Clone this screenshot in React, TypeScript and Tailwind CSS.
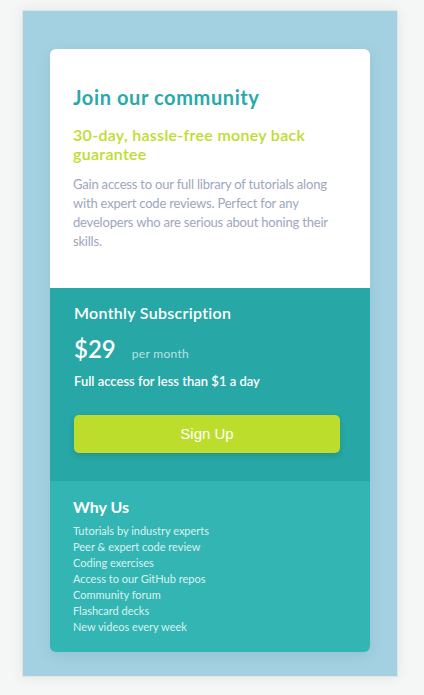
const perks = [
  'Tutorials by industry experts',
  'Peer & expert code review',
  'Coding exercises',
  'Access to our GitHub repos',
  'Community forum',
  'Flashcard decks',
  'New videos every week',
]

export default function App() {
  return (
    <div className="min-h-screen bg-[#f5f6f6] pl-[22px] pt-[10px] font-['Lato',sans-serif]">
      <div className="h-[667px] w-[376px] border border-[#dfe5e7] bg-[#a3d1e1] pl-[27px] pt-[38px] shadow-[0_0_12px_rgba(0,0,0,0.07)]">
        <div className="w-[320px] overflow-hidden rounded-md shadow-[0_4px_14px_rgba(40,90,110,0.12)]">
          {/* intro */}
          <section className="h-[239px] bg-white px-[23px] pt-[36px]">
            <h1 className="text-[20px] font-bold leading-[24px] tracking-[0.6px] text-[#29a9a7]">
              Join our community
            </h1>
            <h2 className="mt-[16px] text-[16px] font-semibold leading-[19px] tracking-[0.3px] text-[#bcdd2b]">
              30-day, hassle-free money back guarantee
            </h2>
            <p className="mt-[12px] text-[13px] leading-[19px] tracking-[-0.2px] text-[#9ea6bd]">
              Gain access to our full library of tutorials along with expert code reviews. Perfect
              for any developers who are serious about honing their skills.
            </p>
          </section>

          {/* pricing */}
          <section className="h-[193px] bg-[#27a7a5] pl-[24px] pt-[15px] text-white">
            <h3 className="text-[16px] font-semibold leading-[20px] tracking-[0.3px]">Monthly Subscription</h3>
            <div className="mt-[12px] flex items-baseline">
              <span className="text-[24px] font-semibold leading-[28px]">$29</span>
              <span className="ml-[16px] text-[12px] leading-[16px] tracking-[0.3px] text-[#b9e3e2]">per month</span>
            </div>
            <p className="mt-[10px] text-[13px] font-semibold leading-[16px]">Full access for less than $1 a day</p>
            <button className="mt-[26px] h-[38px] w-[266px] rounded-[5px] bg-[#bcdd2b] font-['Liberation_Sans',sans-serif] text-[15px] text-white shadow-[0_3px_6px_rgba(0,0,0,0.12)]">
              Sign Up
            </button>
          </section>

          {/* why us */}
          <section className="h-[171px] bg-[#33b6b3] px-[23px] pt-[16px] text-white">
            <h3 className="text-[16px] font-bold leading-[20px]">Why Us</h3>
            <ul className="mt-[6px] text-[11px] leading-[16px] text-[#dcf1f0]">
              {perks.map((p) => (
                <li key={p}>{p}</li>
              ))}
            </ul>
          </section>
        </div>
      </div>
    </div>
  )
}
